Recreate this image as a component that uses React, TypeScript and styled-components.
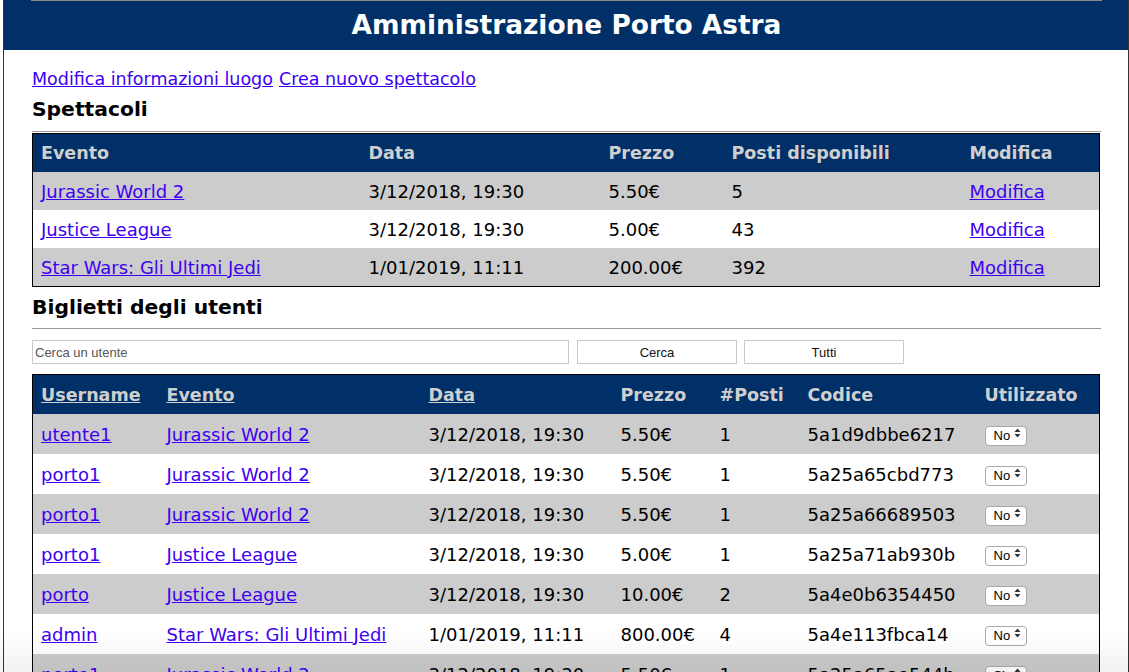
import React from "react";
import styled, { createGlobalStyle } from "styled-components";

const NAVY = "#003067";
const LINK = "#3d00f2";

const Global = createGlobalStyle`
  html, body { margin: 0; padding: 0; background: #fff; }
  body { font-family: "DejaVu Sans", Verdana, sans-serif; color: #000; }
`;

const Page = styled.div`
  margin-left: 3px;
  width: 1124px;
  min-height: 672px;
  border-left: 1px solid #333;
  border-right: 1px solid #333;
`;

const Header = styled.header`
  background: ${NAVY};
  height: 50px;
  display: flex;
  flex-direction: column;
`;

const TopRule = styled.div`
  height: 1px;
  margin: 0 26px 0 27px;
  background: #8a8a8a;
`;

const Title = styled.h1`
  margin: 0;
  flex: 1;
  display: flex;
  align-items: center;
  justify-content: center;
  color: #fff;
  font-size: 26.4px;
  font-weight: bold;
  padding: 0 0 2px 1px;
`;

const Content = styled.main`
  padding: 18px 27px 0 28px;
`;

const Links = styled.div`
  font-size: 17.5px;
  line-height: 22px;
  display: flex;
  gap: 6px;
`;

const A = styled.a`
  color: ${LINK};
  text-decoration: underline;
  cursor: pointer;
`;

const H2 = styled.h2<{ $top: number }>`
  margin: ${(p) => p.$top}px 0 0;
  font-size: 20.3px;
  line-height: 24px;
  font-weight: bold;
`;

const Rule = styled.div<{ $top: number }>`
  height: 1px;
  background: #9a9a9a;
  margin: ${(p) => p.$top}px 0 1px;
`;

const Table = styled.table`
  width: 1067px;
  border-collapse: collapse;
  table-layout: fixed;
  border: 1px solid #000;
  font-size: 18px;
`;

const Th = styled.th<{ $h: number }>`
  background: ${NAVY};
  color: #cfcfcf;
  text-align: left;
  font-weight: bold;
  font-size: 17.5px;
  padding: 0 0 0 8px;
  height: ${(p) => p.$h}px;
  white-space: nowrap;
`;

const HeadLink = styled.a`
  color: #cfcfcf;
  text-decoration: underline;
`;

const Tr = styled.tr<{ $alt: boolean }>`
  background: ${(p) => (p.$alt ? "#cccccc" : "#ffffff")};
`;

const Td = styled.td<{ $h: number }>`
  padding: 0 0 0 8px;
  height: ${(p) => p.$h}px;
  white-space: nowrap;
  overflow: hidden;
`;

const SearchRow = styled.div`
  display: flex;
  gap: 7px;
  margin-top: 11px;
  height: 24px;
`;

const SearchInput = styled.input`
  width: 537px;
  margin-right: 1px;
  box-sizing: border-box;
  height: 24px;
  border: 1px solid #c8c8c8;
  padding: 0 2px;
  font-family: "Liberation Sans", Arial, sans-serif;
  font-size: 13px;
  outline: none;
  &::placeholder { color: #555; }
`;

const Button = styled.button`
  width: 160px;
  height: 24px;
  box-sizing: border-box;
  background: #fff;
  border: 1px solid #c8c8c8;
  font-family: "Liberation Sans", Arial, sans-serif;
  font-size: 13px;
  color: #111;
  padding: 0;
`;

const SecondTable = styled(Table)`
  margin-top: 10px;
`;

const SelectWrap = styled.span`
  position: relative;
  display: inline-block;
  vertical-align: middle;
`;

const Select = styled.select`
  appearance: none;
  -webkit-appearance: none;
  width: 42px;
  height: 20px;
  box-sizing: border-box;
  border: 1px solid #a9a9a9;
  border-radius: 4px;
  background: #fff;
  font-family: "Liberation Sans", Arial, sans-serif;
  font-size: 13px;
  padding: 0 0 0 8px;
  color: #000;
`;

const Arrows = styled.svg`
  position: absolute;
  right: 6px;
  top: 5px;
  pointer-events: none;
`;

const Shade = styled.div`
  position: fixed;
  left: 0;
  right: 0;
  bottom: 0;
  height: 40px;
  pointer-events: none;
  background: linear-gradient(to bottom, rgba(0,0,0,0), rgba(0,0,0,0.05));
`;

const shows = [
  ["Jurassic World 2", "3/12/2018, 19:30", "5.50€", "5"],
  ["Justice League", "3/12/2018, 19:30", "5.00€", "43"],
  ["Star Wars: Gli Ultimi Jedi", "1/01/2019, 11:11", "200.00€", "392"],
];

const tickets = [
  ["utente1", "Jurassic World 2", "3/12/2018, 19:30", "5.50€", "1", "5a1d9dbbe6217", "No"],
  ["porto1", "Jurassic World 2", "3/12/2018, 19:30", "5.50€", "1", "5a25a65cbd773", "No"],
  ["porto1", "Jurassic World 2", "3/12/2018, 19:30", "5.50€", "1", "5a25a66689503", "No"],
  ["porto1", "Justice League", "3/12/2018, 19:30", "5.00€", "1", "5a25a71ab930b", "No"],
  ["porto", "Justice League", "3/12/2018, 19:30", "10.00€", "2", "5a4e0b6354450", "No"],
  ["admin", "Star Wars: Gli Ultimi Jedi", "1/01/2019, 11:11", "800.00€", "4", "5a4e113fbca14", "No"],
  ["porto1", "Jurassic World 2", "3/12/2018, 19:30", "5.50€", "1", "5a25a65ae544b", "Sì"],
];

const cols1 = [328, 240, 123, 238, 138];
const cols2 = [126, 262, 192, 99, 88, 177, 123];

const ArrowIcon = () => (
  <Arrows width="7" height="10" viewBox="0 0 7 10">
    <path d="M3.5 0.5 L6.5 4 H0.5 Z M3.5 9.5 L6.5 6 H0.5 Z" fill="#333" />
  </Arrows>
);

export default function App() {
  return (
    <>
      <Global />
      <Page>
        <Header>
          <TopRule />
          <Title>Amministrazione Porto Astra</Title>
        </Header>
        <Content>
          <Links>
            <A>Modifica informazioni luogo</A>
            <A>Crea nuovo spettacolo</A>
          </Links>
          <H2 $top={7}>Spettacoli</H2>
          <Rule $top={10} />
          <Table>
            <colgroup>
              {cols1.map((w, i) => (
                <col key={i} style={{ width: w }} />
              ))}
            </colgroup>
            <thead>
              <tr>
                {["Evento", "Data", "Prezzo", "Posti disponibili", "Modifica"].map((h) => (
                  <Th key={h} $h={38}>{h}</Th>
                ))}
              </tr>
            </thead>
            <tbody>
              {shows.map((s, i) => (
                <Tr key={i} $alt={i % 2 === 0}>
                  <Td $h={38}><A>{s[0]}</A></Td>
                  <Td $h={38}>{s[1]}</Td>
                  <Td $h={38}>{s[2]}</Td>
                  <Td $h={38}>{s[3]}</Td>
                  <Td $h={38}><A>Modifica</A></Td>
                </Tr>
              ))}
            </tbody>
          </Table>
          <H2 $top={8}>Biglietti degli utenti</H2>
          <Rule $top={9} />
          <SearchRow>
            <SearchInput placeholder="Cerca un utente" />
            <Button>Cerca</Button>
            <Button>Tutti</Button>
          </SearchRow>
          <SecondTable>
            <colgroup>
              {cols2.map((w, i) => (
                <col key={i} style={{ width: w }} />
              ))}
            </colgroup>
            <thead>
              <tr>
                <Th $h={39}><HeadLink>Username</HeadLink></Th>
                <Th $h={39}><HeadLink>Evento</HeadLink></Th>
                <Th $h={39}><HeadLink>Data</HeadLink></Th>
                <Th $h={39}>Prezzo</Th>
                <Th $h={39}>#Posti</Th>
                <Th $h={39}>Codice</Th>
                <Th $h={39}>Utilizzato</Th>
              </tr>
            </thead>
            <tbody>
              {tickets.map((t, i) => (
                <Tr key={i} $alt={i % 2 === 0}>
                  <Td $h={40}><A>{t[0]}</A></Td>
                  <Td $h={40}><A>{t[1]}</A></Td>
                  <Td $h={40}>{t[2]}</Td>
                  <Td $h={40}>{t[3]}</Td>
                  <Td $h={40}>{t[4]}</Td>
                  <Td $h={40}>{t[5]}</Td>
                  <Td $h={40}>
                    <SelectWrap>
                      <Select defaultValue={t[6]}>
                        <option>No</option>
                        <option>Sì</option>
                      </Select>
                      <ArrowIcon />
                    </SelectWrap>
                  </Td>
                </Tr>
              ))}
            </tbody>
          </SecondTable>
        </Content>
      </Page>
      <Shade />
    </>
  );
}
